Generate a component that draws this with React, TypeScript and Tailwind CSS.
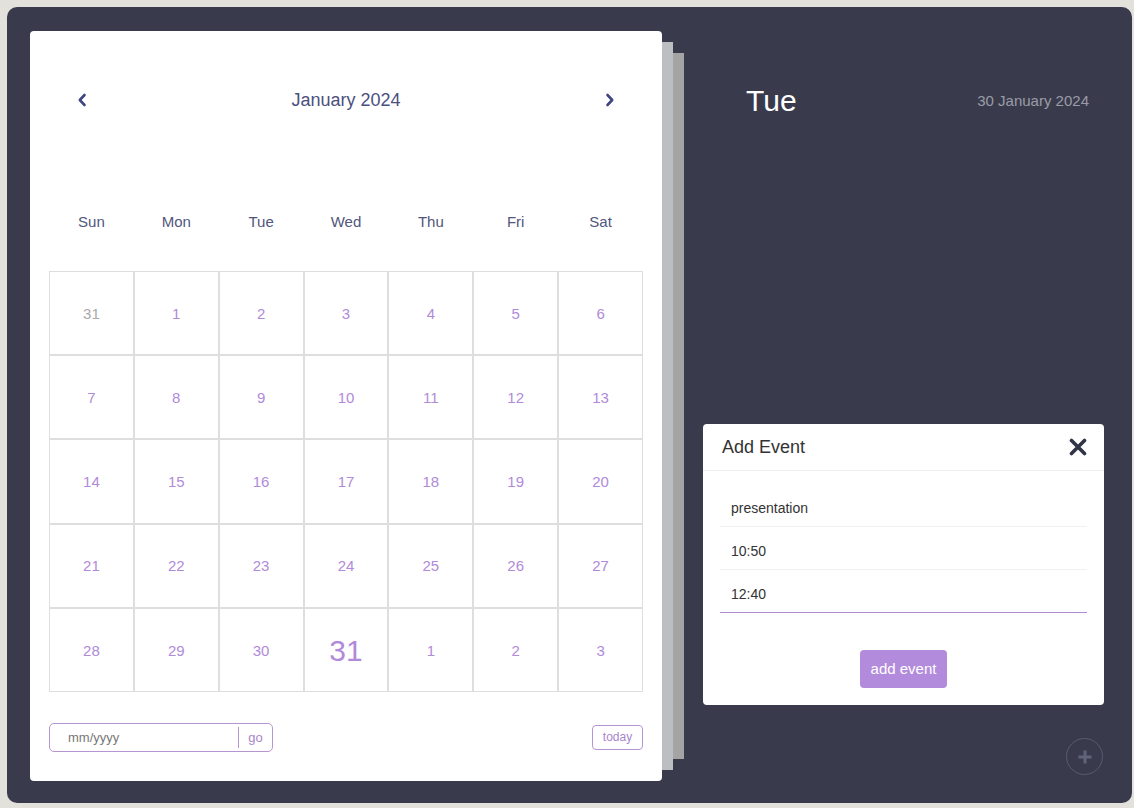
import React from 'react'

const weekdays = ['Sun', 'Mon', 'Tue', 'Wed', 'Thu', 'Fri', 'Sat']

type Day = { n: number; muted?: boolean; today?: boolean }

function buildDays(): Day[] {
  const days: Day[] = [{ n: 31, muted: true }]
  for (let i = 1; i <= 31; i++) days.push({ n: i, today: i === 31 })
  for (let i = 1; i <= 3; i++) days.push({ n: i })
  return days
}

function Chevron({ dir }: { dir: 'left' | 'right' }) {
  return (
    <svg width="10" height="14" viewBox="0 0 10 14" className="text-[#3f4781]">
      <path
        d={dir === 'left' ? 'M7.5 2 L2.8 7 L7.5 12' : 'M2.5 2 L7.2 7 L2.5 12'}
        fill="none"
        stroke="currentColor"
        strokeWidth="2.6"
        strokeLinecap="round"
        strokeLinejoin="round"
      />
    </svg>
  )
}

function Calendar() {
  const days = buildDays()
  return (
    <div className="w-[632px] h-[750px] shrink-0 bg-white rounded-[4px] px-[19px] pt-[49px] shadow-[22px_0_0_-11px_#bdbec2,44px_0_0_-22px_#a4a4a4]">
      {/* header */}
      <div className="h-[40px] flex items-center justify-between px-[28px]">
        <Chevron dir="left" />
        <div className="text-[18px] text-[#4b5080]">January 2024</div>
        <Chevron dir="right" />
      </div>

      {/* weekdays */}
      <div className="grid grid-cols-7 mt-[82px] h-[40px] items-center">
        {weekdays.map(d => (
          <div key={d} className="text-center text-[15px] text-[#52567c]">{d}</div>
        ))}
      </div>

      {/* days */}
      <div className="grid grid-cols-7 mt-[29px]">
        {days.map((d, i) => (
          <div
            key={i}
            className="h-[84.2px] border border-[#dedede] flex items-center justify-center pt-[2px]"
          >
            <span
              className={
                d.muted
                  ? 'text-[15px] text-[#a9a9a9]'
                  : d.today
                  ? 'text-[30px] text-[#b18ad9]'
                  : 'text-[15px] text-[#b18ad9]'
              }
            >
              {d.n}
            </span>
          </div>
        ))}
      </div>

      {/* footer */}
      <div className="mt-[31px] flex items-center justify-between h-[29px]">
        <div className="w-[224px] h-[29px] border border-[#b795d2] rounded-[5px] flex items-center">
          <div className="flex-1 pl-[18px] text-[13px] text-[#777]">mm/yyyy</div>
          <div className="w-px h-[21px] bg-[#b795d2]" />
          <div className="w-[33px] text-center text-[13px] text-[#a985cc]">go</div>
        </div>
        <div className="h-[25px] w-[51px] justify-center border border-[#b795d2] rounded-[4px] flex items-center text-[12px] text-[#a985cc]">
          today
        </div>
      </div>
    </div>
  )
}

function AddEvent() {
  const fields = [
    { v: 'presentation', active: false },
    { v: '10:50', active: false },
    { v: '12:40', active: true },
  ]
  return (
    <div className="ml-[41px] h-[281px] bg-white rounded-[4px] flex flex-col">
      <div className="h-[47px] border-b border-[#eeeeee] flex items-center justify-between pl-[19px] pr-[17px]">
        <div className="text-[18px] text-[#333]">Add Event</div>
        <svg width="18" height="18" viewBox="0 0 18 18">
          <path d="M2.5 2.5 L15.5 15.5 M15.5 2.5 L2.5 15.5" stroke="#2f3446" strokeWidth="3.6" strokeLinecap="round" />
        </svg>
      </div>
      <div className="px-[17px] pt-[13px]">
        {fields.map(f => (
          <div key={f.v}>
            <div className="h-[42px] flex items-center pl-[11px] pt-[6px] text-[14px] text-[#333]">
              {f.v}
            </div>
            {f.active ? (
              <div className="h-px bg-[#b38cd6]" />
            ) : (
              <div className="h-px bg-[#f0f0f0]" />
            )}
          </div>
        ))}
      </div>
      <div className="flex justify-center mt-[37px]">
        <div className="w-[87px] h-[38px] bg-[#b38bdc] rounded-[4px] flex items-center justify-center text-[15px] text-white">
          add event
        </div>
      </div>
    </div>
  )
}

export default function App() {
  return (
    <div className="w-[1134px] h-[808px] bg-[#e3e1dc] pt-[7px] pl-[7px] font-['Liberation_Sans',Arial,sans-serif]">
      <div className="w-[1125px] h-[796px] bg-[#393b4d] rounded-[10px] flex pl-[23px] pt-[24px]">
        <Calendar />
        <div className="flex-1 flex flex-col pr-[28px]">
          <div className="mt-[49px] h-[40px] flex items-center justify-between pl-[84px] pr-[15px]">
            <div className="text-[30px] text-white">Tue</div>
            <div className="text-[15px] text-[#9a9ba6] pt-[2px]">30 January 2024</div>
          </div>
          <div className="mt-[304px]">
            <AddEvent />
          </div>
          <div className="mt-[33px] flex justify-end pr-px">
            <div className="w-[37px] h-[37px] rounded-full border border-[#585b6e] flex items-center justify-center">
              <svg width="16" height="16" viewBox="0 0 16 16">
                <path d="M8 1.5 V14.5 M1.5 8 H14.5" stroke="#60647a" strokeWidth="3" />
              </svg>
            </div>
          </div>
        </div>
      </div>
    </div>
  )
}
